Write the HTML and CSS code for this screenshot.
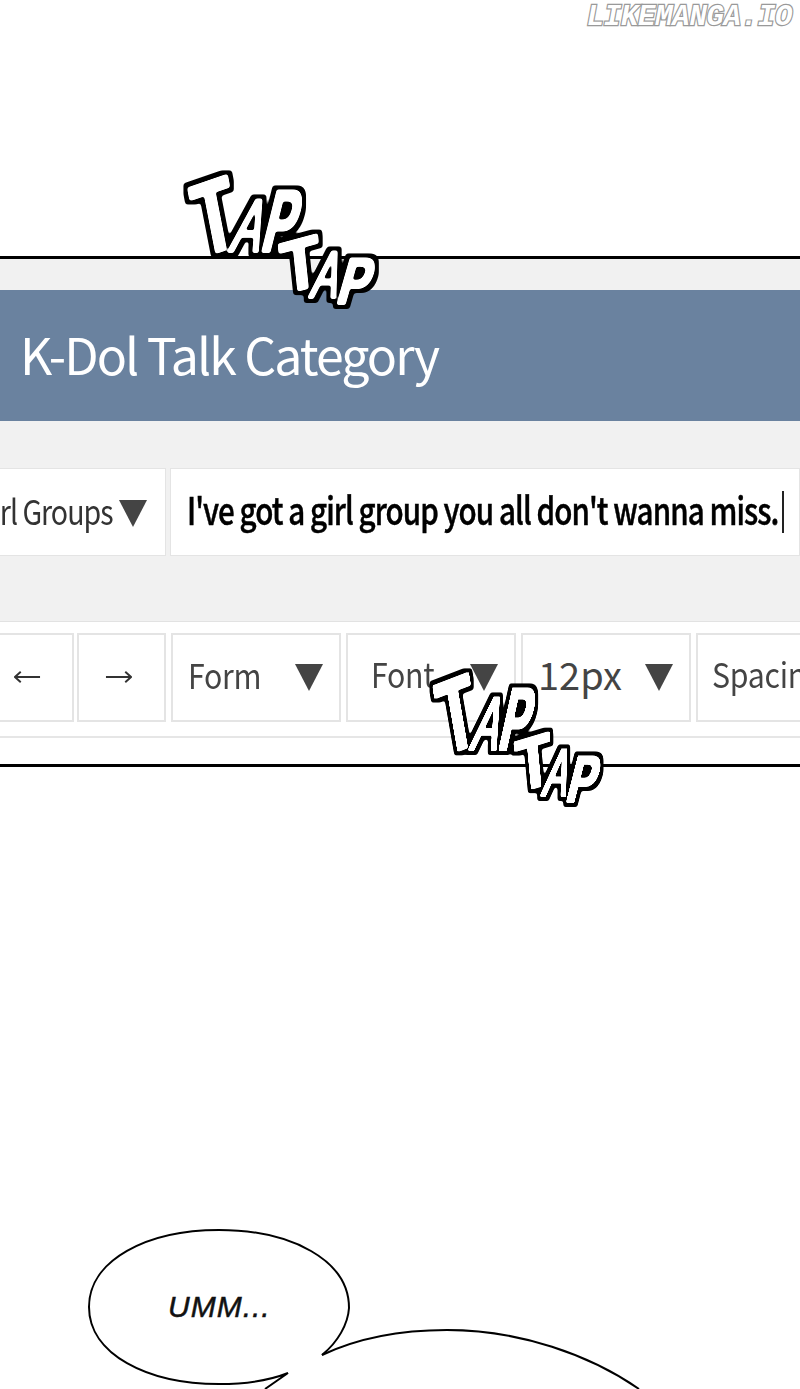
FILE: index.html
```html
<!DOCTYPE html>
<html lang="en">
<head>
<meta charset="utf-8">
<title>K-Dol Talk Category</title>
<link rel="stylesheet" href="styles.css">
</head>
<body>
<div class="page">
  <div class="watermark">LIKEMANGA.IO</div>
  <section class="panel">
    <div class="band band-top"></div>
    <h1 class="title">K-Dol Talk Category</h1>
    <div class="band band-mid"></div>
    <div class="compose">
      <div class="cell category"><span class="category-text">Girl Groups</span><svg class="tri" viewBox="0 0 28 27"><polygon points="0,0 28,0 14,27"/></svg></div>
      <div class="cell subject"><span class="subject-text">I've got a girl group you all don't wanna miss.</span><span class="caret"></span></div>
    </div>
    <div class="band band-low"></div>
    <div class="toolbar">
      <div class="tool arrow arrow-left"><svg viewBox="0 0 28 14"><path d="M1 7H27M7 1.5 1 7l6 5.5"/></svg></div>
      <div class="tool arrow arrow-right"><svg viewBox="0 0 28 14"><path d="M1 7H27M21 1.5 27 7l-6 5.5"/></svg></div>
      <div class="tool select"><span class="label">Form</span><svg class="tri" viewBox="0 0 28 27"><polygon points="0,0 28,0 14,27"/></svg></div>
      <div class="tool select"><span class="label font-label">Font</span><svg class="tri" viewBox="0 0 28 27"><polygon points="0,0 28,0 14,27"/></svg></div>
      <div class="tool select"><span class="size">12px</span><svg class="tri" viewBox="0 0 28 27"><polygon points="0,0 28,0 14,27"/></svg></div>
      <div class="tool spacing"><span class="label spacing-label">Spacing</span></div>
    </div>
    <div class="toolbar-rule"></div>
  </section>

  <svg class="sfx sfx-one" viewBox="0 0 210 150" preserveAspectRatio="none">
    <defs>
      <filter id="outline" x="-10%" y="-10%" width="120%" height="120%" color-interpolation-filters="sRGB">
        <feMorphology in="SourceAlpha" operator="dilate" radius="5" result="fat"/>
        <feGaussianBlur in="fat" stdDeviation="1.4"/>
        <feComponentTransfer result="round"><feFuncA type="linear" slope="4" intercept="-1.5"/></feComponentTransfer>
        <feFlood flood-color="#000"/>
        <feComposite in2="round" operator="in" result="black"/>
        <feMorphology in="SourceAlpha" operator="dilate" radius="1.2" result="mid"/>
        <feGaussianBlur in="mid" stdDeviation=".8"/>
        <feComponentTransfer result="midround"><feFuncA type="linear" slope="4" intercept="-1.5"/></feComponentTransfer>
        <feFlood flood-color="#fff"/>
        <feComposite in2="midround" operator="in" result="white"/>
        <feMerge><feMergeNode in="black"/><feMergeNode in="white"/></feMerge>
      </filter>
    </defs>
    <g class="sfx-group">
      <text transform="translate(41 86) rotate(-11) skewY(-8) scale(.95 1.42)">T</text>
      <text class="narrow-a" transform="translate(63 87) skewX(-17) scale(.62 1.06)">A</text>
      <text transform="translate(95 87) skewX(-14) scale(.66 1.24)">P</text>
      <text transform="translate(123 124) rotate(-6) skewY(-9) scale(.92 1)">T</text>
      <text class="narrow-a" transform="translate(142 133) skewX(-15) scale(.56 .94)">A</text>
      <text transform="translate(170 139) skewX(-16) scale(.64 .92)">P</text>
    </g>
  </svg>
  <svg class="sfx sfx-two" viewBox="0 0 210 150" preserveAspectRatio="none">
    <g class="sfx-group">
      <text transform="translate(41 86) rotate(-11) skewY(-8) scale(.95 1.42)">T</text>
      <text class="narrow-a" transform="translate(63 87) skewX(-17) scale(.62 1.06)">A</text>
      <text transform="translate(95 87) skewX(-14) scale(.66 1.24)">P</text>
      <text transform="translate(123 124) rotate(-6) skewY(-9) scale(.92 1)">T</text>
      <text class="narrow-a" transform="translate(142 133) skewX(-15) scale(.56 .94)">A</text>
      <text transform="translate(170 139) skewX(-16) scale(.64 .92)">P</text>
    </g>
  </svg>

  <svg class="bubbles" viewBox="0 0 800 169">
    <path d="M322 135C338 122 348 104 349 88C349 40 291 10 219 10C147 10 89 40 89 87C89 134 147 164 219 164C246 164 268 161 288 153L265 169"/>
    <path d="M322 135C358 118 400 110 447 110C520 110 590 135 639 169"/>
    <text class="umm" x="168" y="97">UMM...</text>
  </svg>
</div>
</body>
</html>
```
FILE: styles.css
```css
* { box-sizing: border-box; }
html, body { margin: 0; padding: 0; background: #fff; }
.page { position: relative; width: 800px; height: 1389px; overflow: hidden; background: #fff; font-family: "Noto Sans CJK KR", "Noto Sans", sans-serif; color: #333; }

.watermark { height: 256px; padding: 2px 8px 0 0; text-align: right; font: italic bold 29px/32px "Liberation Mono", monospace; letter-spacing: -.3px; color: #fff; -webkit-text-stroke: 2.4px #999; paint-order: stroke fill; }

.panel { height: 511px; border-top: 3px solid #000; border-bottom: 3px solid #000; display: flex; flex-direction: column; }
.band { background: #f1f1f1; flex: none; }
.band-top { height: 31px; }
.title { height: 131px; margin: 0; padding: 0 0 0 20px; background: #6a829f; color: #fff; font-size: 50px; line-height: 126px; font-weight: 400; letter-spacing: -1.9px; white-space: nowrap; flex: none; }
.band-mid { height: 47px; }

.compose { height: 88px; display: flex; gap: 4px; background: #f1f1f1; flex: none; }
.cell { background: #fff; border: 1px solid #e4e4e4; height: 88px; display: flex; align-items: center; overflow: hidden; }
.category { width: 166px; justify-content: flex-end; border-left: 0; padding-right: 18px; gap: 6px; }
.category-text { font-size: 34px; letter-spacing: -1.2px; color: #333; white-space: nowrap; flex: none; margin-bottom: 3px; transform: scaleX(.84); transform-origin: right center; }
.category .tri { margin-top: 3px; }
.subject { flex: 1; padding-left: 16px; }
.subject-text { width: 592px; flex: none; font-size: 38px; font-weight: 500; letter-spacing: -1.2px; color: #000; -webkit-text-stroke: .5px #000; white-space: nowrap; margin-bottom: 7px; transform: scaleX(.778); transform-origin: left center; }
.caret { width: 2px; height: 42px; background: #222; margin-left: 3px; flex: none; }
.tri { width: 28px; height: 27px; flex: none; display: block; }
.tri polygon { fill: #444; }

.band-low { height: 66px; border-bottom: 1px solid #e2e2e2; }

.toolbar { display: flex; gap: 5px; padding-top: 11px; height: 114px; overflow: hidden; flex: none; }
.tool { height: 89px; background: #fff; border: 2px solid #e4e4e4; display: flex; align-items: center; flex: none; font-size: 34px; color: #444; letter-spacing: -.3px; white-space: nowrap; }
.label { margin-bottom: 6px; transform: scaleX(.89); transform-origin: left center; }
.font-label, .spacing-label { margin-bottom: 9px; }
.arrow { justify-content: center; }
.arrow svg { width: 27px; height: 14px; display: block; margin-bottom: 2px; }
.arrow path { fill: none; stroke: #333; stroke-width: 2; }
.arrow-left { width: 74px; border-left: 0; padding-right: 18px; }
.arrow-right { width: 89px; margin-left: -2px; padding-right: 6px; }
.select { width: 170px; padding: 0 16px 0 15px; justify-content: space-between; }
.font-label { margin-left: 8px; }
.size { font-size: 38px; letter-spacing: 0; margin: 0 0 9px 0; }
.spacing { width: 140px; padding-left: 14px; }
.toolbar-rule { height: 2px; background: #e6e6e6; flex: none; }

.sfx { position: absolute; height: 150px; overflow: visible; }
.sfx-one { left: 180px; top: 165px; width: 210px; }
.sfx-two { left: 426px; top: 663px; width: 188px; }
.sfx-group { filter: url(#outline); }
.sfx text { font-family: "Liberation Sans", sans-serif; font-weight: 700; font-size: 72px; fill: #fff; text-anchor: middle; }
.sfx .narrow-a { font-weight: 400; }

.bubbles { position: absolute; left: 0; top: 1220px; width: 800px; height: 169px; }
.bubbles path { fill: none; stroke: #000; stroke-width: 2; }
.umm { font-family: "Liberation Sans", sans-serif; font-style: italic; font-size: 30px; letter-spacing: 1px; fill: #111; stroke: #111; stroke-width: .5px; }
```
